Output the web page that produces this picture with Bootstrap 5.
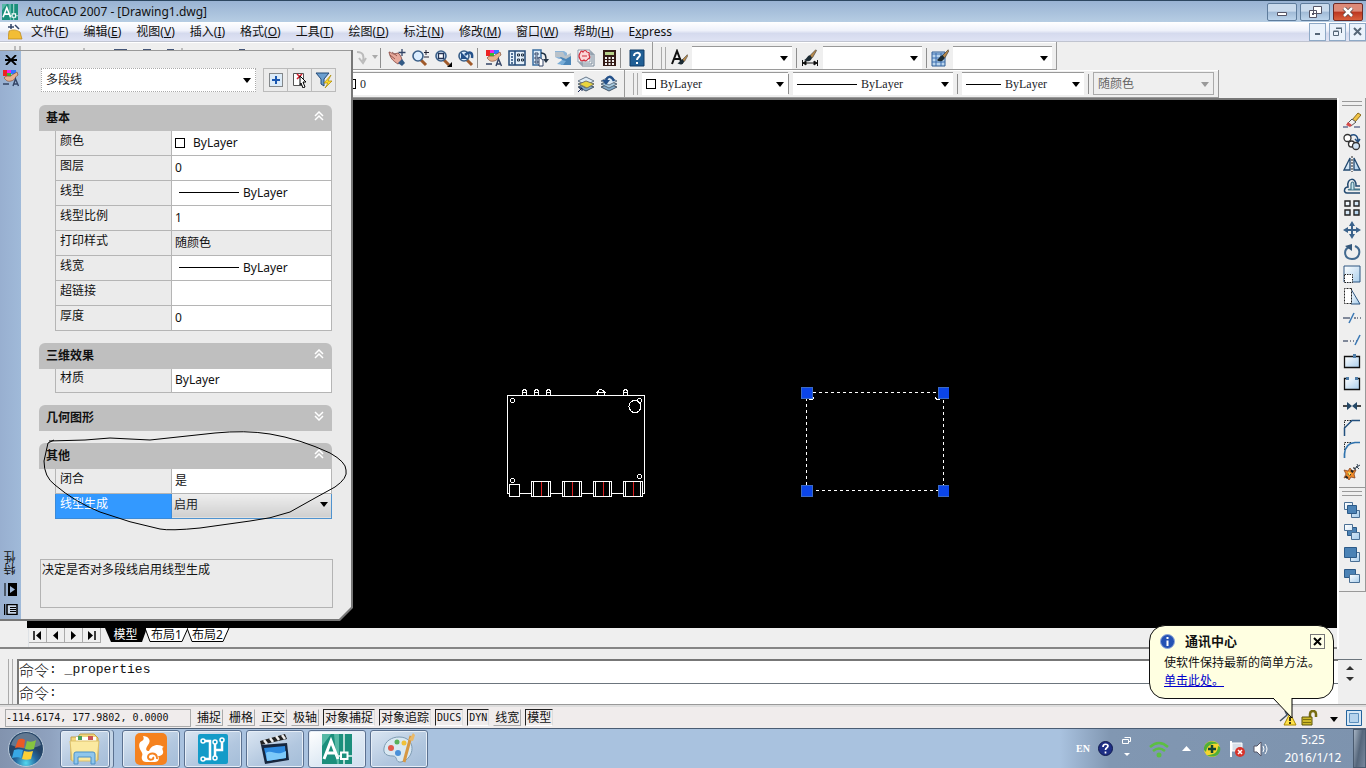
<!DOCTYPE html>
<html lang="zh-CN">
<head>
<meta charset="utf-8">
<meta name="viewport" content="width=device-width, initial-scale=1">
<title>AutoCAD 2007 - [Drawing1.dwg]</title>
<link href="https://cdn.jsdelivr.net/npm/bootstrap@5.3.0/dist/css/bootstrap.min.css" rel="stylesheet">
<style>
:root{--face:#efefef;--line:#9a9a9a;--ui:"Noto Sans","Noto Sans CJK SC",sans-serif}
body{font-family:var(--ui);font-size:12px;line-height:16px;color:#111;background:var(--face);height:100vh;overflow:hidden}
svg{display:block;flex:none}
button,select,input{font:inherit;color:inherit;border-radius:0}
.plain-btn{border:0;background:none;padding:0;display:flex;align-items:center;justify-content:center;flex:none}
/* title and menu */
.titlebar{height:22px;border-top:1px solid #2d4760;background:linear-gradient(#99b3d3,#b6cde3);padding:0 3px 0 2px}
.titlebar h1{font-size:12px;line-height:20px;margin:0 0 0 8px;font-weight:400}
.win-btn{width:30px;height:18px;border:1px solid #5e7c9c;border-radius:2px;background:linear-gradient(#c9daec 0 45%,#a0bad6 50%,#bdd5ec);padding:0;display:flex;align-items:center;justify-content:center}
.win-close{background:linear-gradient(#dd8a78 0 45%,#bb3620 50%,#d9603d);border-color:#6d2a26}
.menubar{height:20px;background:linear-gradient(#fff,#eef1fa 45%,#d5daee 60%,#dfe3f4);border-bottom:1px solid #c0c4d0}
.menu-list{gap:15px}
.menubar a{color:#111;text-decoration:none;line-height:19px;white-space:nowrap}
.btn-gap{gap:3px}
.mdi{width:17px;height:18px;border:1px solid #8ea9c6;background:#eaf2fb;padding:0;display:flex;align-items:center;justify-content:center}
/* toolbars */
.bar-row{height:28px}
.tool-panel{border-right:1px solid var(--line);border-bottom:1px solid var(--line);box-shadow:inset 0 1px #fff}
.tool{width:23px;height:24px}
.vsep{width:1px;height:20px;background:#8e8e8e;flex:none}
.grips{width:5px;height:22px;border-left:1px solid #aaa;border-right:1px solid #aaa;flex:none}
.combo{background:#fff;height:23px;flex:none;border-top:1px solid #999}
.combo .form-select{border:0;padding:0 18px 0 4px;height:22px;line-height:22px;font-size:12px;background-color:transparent;background-position:right 4px center;background-size:8px 5px;min-height:0;
background-image:url("data:image/svg+xml,%3Csvg xmlns='http://www.w3.org/2000/svg' viewBox='0 0 8 5'%3E%3Cpath d='M0 0h8L4 5z'/%3E%3C/svg%3E")}
.combo .form-select:disabled{color:#666;opacity:1;background-image:url("data:image/svg+xml,%3Csvg xmlns='http://www.w3.org/2000/svg' viewBox='0 0 8 5'%3E%3Cpath fill='%23999' d='M0 0h8L4 5z'/%3E%3C/svg%3E")}
.combo.off{background:none;border:1px solid #aaa}
.serif{font-family:"Liberation Serif","Noto Sans CJK SC",serif;color:#000}
.swatch{width:10px;height:10px;border:1px solid #000;background:#fff;flex:none}
.rule-s{height:1px;background:#000;flex:none}
.w60{width:60px}.w35{width:35px}
.sliver{width:349px}
/* drawing area */
.canvas{background:#000;border-top:2px solid #777;min-height:0;margin-left:27px}
.canvas svg{position:absolute}
.d-board{left:478px;top:285px}
.d-sel{left:772px;top:285px}
.side{width:29px;border-left:2px solid #fff}
.side .tool{height:22px;width:28px}
.side-group{border-bottom:1px solid #999;border-right:1px solid #999}
.hgrips{height:5px;width:20px;border-top:1px solid #999;border-bottom:1px solid #999;margin:3px 0}
.tabstrip{height:21px;border-bottom:2px solid #858585}
.tabstrip .nav-b{width:18px;height:15px;border-right:1px solid #aaa;border-bottom:1px solid #aaa}
.sheet{position:relative;height:15px;padding:0;border:0;background:none;line-height:13px;font-size:12px;display:flex;align-items:flex-start;justify-content:center}
.sheet svg{position:absolute;left:0;top:0}
.sheet span{position:relative}
.tab-l{width:41px}
/* command window */
.command{height:56px;padding-top:10px;border-bottom:1px solid #999}
.cmd-box{background:#fff;border-top:2px solid #777;border-left:2px solid #777}
.cmd-box .ln{height:23px;display:flex;align-items:center;font-family:"Noto Sans CJK SC",sans-serif;font-size:15px;font-weight:300;line-height:18px;white-space:pre;padding-bottom:4px}
.cmd-box label.ln{height:20px;padding-bottom:2px}
.cmd-box code{font-family:"Liberation Mono",monospace;font-size:13px;color:#111}
.cmd-box input{border:0;outline:0;background:none;min-width:0}
.thumbs{width:24px}
/* status */
.statusbar{height:23px;background:#f0ecec;border-top:2px solid #ddd;padding:0 4px 0 5px;gap:4px}
.statusbar button{border:1px solid transparent;border-right-color:#aaa;border-bottom-color:#aaa;background:none;padding:0 1px;height:17px;line-height:16px;white-space:nowrap}
.statusbar button.on{border-color:#222 #ddd #fff #222}
.mono{font-family:"DejaVu Sans Mono",monospace;font-size:10px}
.coords{width:186px;height:18px;border:1px solid #aaa;line-height:16px;white-space:pre}
/* taskbar */
.taskbar{height:40px;background:linear-gradient(90deg,#8293ae 0,#8fa2bf 50px,#a9c2df 100px,#a9c2df 1060px,#8197b2 1110px,#7d93ae);border-top:1px solid #4b5d74}
.task-list{gap:4px}
.start{width:60px;padding-right:8px}
.task{width:58px;height:38px;border:1px solid #5b7190;border-radius:3px;background:linear-gradient(150deg,#dbe6f2,#b2c7df 60%,#a4bdd8);box-shadow:inset 0 0 0 1px #e6eef7;padding:0;display:flex;align-items:center;justify-content:center}
.task.stack{width:50px;margin-right:8px;box-shadow:inset 0 0 0 1px #e6eef7,3px 0 0 #c3d4e6,4px 0 0 #5b7190}
.task.now{background:linear-gradient(150deg,#fff,#dce8f3 60%,#cfe0ef)}
.lang{font-size:10px;color:#fff;font-weight:700}
.clock{color:#fff;font-size:12px;line-height:18px;width:64px}
.show-desk{width:13px;height:39px;border:1px solid #4a5b70;background:linear-gradient(100deg,#a5b3c3,#55667b 50%,#77889d)}
/* properties palette */
.palette{position:absolute;left:0;top:50px;width:353px;height:571px;background:#777;clip-path:polygon(0 0,100% 0,100% 558px,340px 100%,0 100%);z-index:5}
.palette-in{width:351px;height:569px;background:#ebebeb;clip-path:polygon(0 0,100% 0,100% 557px,339px 100%,0 100%);border-top:1px solid #999}
.spine{width:21px;flex:none;background:linear-gradient(90deg,#98afd0,#a0bad9)}
.spine-title{writing-mode:vertical-rl;transform:rotate(180deg);font-size:12px;line-height:16px}
.p-body{padding:17px 18px 11px 18px}
.obj-row{margin-bottom:13px;padding-left:2px}
.combo.obj{width:215px;height:24px;border:1px dotted #aaa}
.sq{width:25px;height:24px;border:1px solid #bbb;margin-left:-1px}
.sec-h{height:26px;background:#bfbfbf;border:0;border-radius:6px 6px 0 0;padding:0 8px 0 7px;font-weight:700;font-size:12px;line-height:24px;width:293px;display:flex;align-items:center;justify-content:space-between;text-align:left}
.sec{margin-bottom:12px}
.props{width:277px;margin:0 0 0 16px;table-layout:fixed;border-collapse:collapse;font-size:12px}
.props th,.props td{height:25px;border:1px solid #b5b5b5;line-height:18px;padding:0 0 4px 4px;font-weight:400}
.props tr:first-child>*{border-top:0;height:24px}
.props th{width:116px}
.props td{background:#fff;padding:0 0 0 3px}
.props .dim{background:#ebebeb}
.props input{border:0;padding:0;width:100%;height:18px;background:none;outline:0;display:block}
.props .sel th{background:#3399ff;color:#fff;border-color:#3a8ad8}
.props .sel td{background:linear-gradient(#efefef,#cfcfcf);border-color:#4f93cf;padding:0 0 2px 2px}
.props .sel .form-select{border:0;padding:0;height:20px;min-height:0;line-height:20px;font-size:12px;background-color:transparent;background-position:right 3px center;background-size:8px 5px;background-image:url("data:image/svg+xml,%3Csvg xmlns='http://www.w3.org/2000/svg' viewBox='0 0 8 5'%3E%3Cpath d='M0 0h8L4 5z'/%3E%3C/svg%3E")}
.hint{height:49px;width:293px;border:1px solid #b3b3b3;padding:2px 1px;margin-left:1px}
.scribble{position:absolute;left:40px;top:379px;pointer-events:none}
/* balloon */
.balloon{position:absolute;right:32px;bottom:69px;width:185px;height:74px;background:#ffffe1;border:1px solid #111;border-radius:16px;z-index:6;padding:7px 8px 0 10px;white-space:nowrap;font-family:"Noto Sans CJK SC",sans-serif}
.balloon .tail{position:absolute;left:123px;top:71px}
.balloon .shut{width:15px;height:15px;border:1px solid #777;background:#ffffe8}
.balloon strong{font-size:13px;margin-left:10px}
.balloon-text{line-height:18px}
.balloon a{color:#00c}
</style>
</head>
<body class="d-flex flex-column position-relative">

<svg width="0" height="0" class="position-absolute" aria-hidden="true">
 <defs>
  <linearGradient id="gb" x1="0" y1="0" x2="1" y2="1"><stop offset="0" stop-color="#fff"/><stop offset="1" stop-color="#a8cdec"/></linearGradient>
  <symbol id="brush" viewBox="0 0 18 18"><path d="M17 1 9 9l2 3 2-1 5-9z" fill="#b98a4a" stroke="#333" stroke-width=".8"/><path d="M10 8c-4 0-4 5-8 6 4 3 10 2 10-3z" fill="#1c2b33"/></symbol>
  <symbol id="lens" viewBox="0 0 18 18"><path d="m10 11 5 5" stroke="#a05a2a" stroke-width="3"/><circle cx="7" cy="7" r="5" fill="#dceeff" stroke="#3a5f88" stroke-width="1.6"/></symbol>
  <symbol id="props-i" viewBox="0 0 18 18"><path d="M1 1h4v6H1z" fill="#e22"/><path d="M5 1h4v4H5z" fill="#e2e"/><path d="M9 1h5v4H9z" fill="#37f"/><path d="M5 4h4v3H5z" fill="#3b3"/><path d="M2 9c3-4 6 0 8-3l5-3 1 3c-3 1-2 5-7 6-4 1-5-1-7-3z" fill="#e9b18e" stroke="#84513a" stroke-width=".7"/><path d="m11 17 2.500-7 3 7m-5-2h4M1 15h6" stroke="#346" fill="none" stroke-width="1.400"/></symbol>
  <symbol id="layers" viewBox="0 0 18 18"><path d="m1 12 8-3 8 3-8 4z" fill="#7fa8c8" stroke="#456"/><path d="m1 9 8-3 8 3-8 4z" fill="#a8cbe0" stroke="#567"/><path d="m1 6 8-4 8 4-8 4z" fill="#dceaf5" stroke="#678"/></symbol>
  <symbol id="up2" viewBox="0 0 10 10"><path d="m1 5 4-4 4 4M1 9l4-4 4 4" fill="none" stroke="#fff" stroke-width="1.500"/></symbol>
  <symbol id="acad" viewBox="0 0 30 30"><path d="M0 0h30v30H0z" fill="#1b8f7c"/><path d="M0 0h9l-9 12zM12 0h5v30h-2z" fill="#56b9a5"/><path d="M2 25 9 7l7 18M5 19h9" fill="none" stroke="#fff" stroke-width="3"/><path d="M22 0v18m0 7v5M14 22h5m7 0h4" stroke="#e9f6f2" stroke-width="1.500"/><path d="M19 18.500h6.500V25H19z" fill="none" stroke="#fff" stroke-width="2"/></symbol>
 </defs>
</svg>

<header>
 <div class="titlebar d-flex align-items-center">
  <svg width="16" height="16"><use href="#acad"/></svg>
  <h1 class="flex-grow-1">AutoCAD 2007 - [Drawing1.dwg]</h1>
  <div class="d-flex btn-gap">
   <button class="win-btn" aria-label="最小化"><svg width="12" height="10"><path d="M1.500 5.500h9v3h-9z" fill="#fff" stroke="#556"/></svg></button>
   <button class="win-btn" aria-label="还原"><svg width="13" height="12"><path d="M4.500.5h8v7h-8zM.5 4.500h7v7h-7z" fill="#fff" stroke="#556"/><path d="M3 7h2v2H3z" fill="#556"/></svg></button>
   <button class="win-btn win-close" aria-label="关闭"><svg width="12" height="10"><path d="m2 1 8 8m0-8L2 9" stroke="#544" stroke-width="4"/><path d="m2 1 8 8m0-8L2 9" stroke="#fff" stroke-width="2.500"/></svg></button>
  </div>
 </div>
 <nav class="menubar d-flex align-items-center ps-2">
  <svg width="15" height="16" class="me-2"><path d="M1 2h6l5 4v9H1z" fill="#fff"/><path d="m0 15 1-8c4-2 8-1 11 1l2 7z" fill="#f2bd35" stroke="#b98417" stroke-width=".7"/><path d="M3 0v5M0 3h6m1-2 4 4" stroke="#346" stroke-width="1.500"/></svg>
  <div class="d-flex flex-grow-1 menu-list">
   <a href="#">文件(<u>F</u>)</a><a href="#">编辑(<u>E</u>)</a><a href="#">视图(<u>V</u>)</a><a href="#">插入(<u>I</u>)</a><a href="#">格式(<u>O</u>)</a><a href="#">工具(<u>T</u>)</a><a href="#">绘图(<u>D</u>)</a><a href="#">标注(<u>N</u>)</a><a href="#">修改(<u>M</u>)</a><a href="#">窗口(<u>W</u>)</a><a href="#">帮助(<u>H</u>)</a><a href="#">E<u>x</u>press</a>
  </div>
  <div class="d-flex btn-gap">
   <button class="mdi" aria-label="最小化图形"><svg width="9" height="9"><path d="M2 7h5" stroke="#567" stroke-width="2"/></svg></button>
   <button class="mdi" aria-label="还原图形"><svg width="9" height="9"><path d="M3 1.500h5.500V6M.5 4.500h5v4h-5zM3 1h6M.5 4h5" fill="none" stroke="#567"/></svg></button>
   <button class="mdi" aria-label="关闭图形"><svg width="9" height="9"><path d="m1 1 7 7m0-7L1 8" stroke="#567" stroke-width="2"/></svg></button>
  </div>
 </nav>

 <div class="bar-row d-flex">
  <div class="tool-panel d-flex align-items-center pt-1 pe-1">
   <svg class="sliver" height="24"><path d="M15 0v6m5-6v6M84 2v6m98-6v6m111-6v6" stroke="#888"/><path d="M49 5h7m58-1h13m16 0h8m16 0h7m65 0h6" stroke="#457" stroke-width="2"/></svg>
   <button class="tool plain-btn" aria-label="重做"><svg width="18" height="18"><path d="M5 3c7 0 7 5 6 9m-4-3 4 5 3-5" fill="none" stroke="#bbb" stroke-width="2"/></svg></button>
   <svg width="8" height="5"><path d="M0 0h6L3 4z" fill="#aaa"/></svg>
   <span class="vsep me-1"></span>
   <button class="tool plain-btn" aria-label="平移"><svg width="18" height="18"><path d="M1 3c2 0 3 2 5 2l4-1c3 2 4 6 4 8l-4 3C5 12 2 9 1 3z" fill="#e7a99b" stroke="#82433b" stroke-width=".8"/><path d="m2 6 5 4M4 3l5 4" stroke="#82433b" stroke-width=".8"/><path d="m10 14 4-4 3 4-3 3z" fill="#345b86"/><path d="M14 0v7M10.500 3.500h7" stroke="#346" stroke-width="1.300"/></svg></button>
   <button class="tool plain-btn" aria-label="实时缩放"><svg width="18" height="18"><use href="#lens"/><path d="M15 1v5m-2-2.500h5M13 8h5" stroke="#223"/></svg></button>
   <button class="tool plain-btn" aria-label="窗口缩放"><svg width="18" height="18"><use href="#lens"/><path d="M4.500 4.500h5v5h-5z" fill="#fff" stroke="#235" stroke-width="1.300"/><path d="M18 13v5h-5z"/></svg></button>
   <button class="tool plain-btn" aria-label="缩放上一个"><svg width="18" height="18"><use href="#lens"/><path d="M15 9c1-6-3-7-7-3" fill="none" stroke="#24518a" stroke-width="2.500"/><path d="M4 3v7h7z" fill="#24518a"/></svg></button>
   <span class="vsep me-1"></span>
   <button class="tool plain-btn" aria-label="特性"><svg width="18" height="18"><use href="#props-i"/></svg></button>
   <button class="tool plain-btn" aria-label="设计中心"><svg width="18" height="18"><path d="M1 2h16v14H1z" fill="#e5f1fb" stroke="#234a77" stroke-width="1.500"/><path d="M7 2v14M3 5h2M3 8h2m-2 3h2m-2 3h2" stroke="#234a77" stroke-width="1.500"/><path d="M9.500 5h2v2h-2zm4 0h2v2h-2zm-4 5h2v2h-2zm4 0h2v2h-2z" fill="none" stroke="#234"/></svg></button>
   <button class="tool plain-btn" aria-label="工具选项板"><svg width="18" height="18"><path d="M2 1h8v15H2z" fill="#d9ebf9" stroke="#3a6da0" stroke-width="1.500"/><path d="M4 4h3v2H4zm0 4h3v2H4zm0 4h3v2H4z" fill="none" stroke="#346"/><path d="M10 4c5 0 5 3 5 8" fill="none" stroke="#234" stroke-width="1.500"/><path d="m12 10 3 4 3-4z" fill="#234"/><path d="M8 8l4 3v6H8z" fill="#fff" stroke="#346"/></svg></button>
   <button class="tool plain-btn" aria-label="图纸集"><svg width="18" height="18"><path d="M1 2h9l3 2v6H5L1 8z" fill="#8db5d8"/><path d="M5 7h12v9H7l2-4z" fill="#4b86b8"/><path d="M1 3h8l2 4 6-3v3l-5 3-5-2H1z" fill="#b9c2c9"/><path d="m3 15 5-4 4 1-3 4z" fill="#7aaed8"/></svg></button>
   <button class="tool plain-btn" aria-label="标记集"><svg width="18" height="18"><path d="M5 5h12v12H5zM3 3h12v12H3z" fill="#f4f4f4" stroke="#789"/><path d="M1 1h12v12H1z" fill="#fff" stroke="#89a"/><path d="M3 4q1-3 3-1 2-3 4 0 3 0 2 3 2 3-1 4-2 3-4 1-3 2-4-1-2-3 0-6zM5 7h5" fill="#fbd6d8" stroke="#d02a3a" stroke-width="1.200"/></svg></button>
   <button class="tool plain-btn" aria-label="计算器"><svg width="18" height="18"><path d="M3 1h13v16H3z" fill="#321a16"/><path d="M5 3h9v3H5z" fill="#b6d08a"/><path d="M5 9h9M5 12h9m-9 3h9" stroke="#f2f2f2" stroke-width="2" stroke-dasharray="2 1.500"/></svg></button>
   <span class="vsep me-1"></span>
   <button class="tool plain-btn" aria-label="帮助"><svg width="18" height="18"><path d="M2 1h14v16H2z" fill="#215f95" stroke="#123c66"/><path d="M6 7c0-4 6-4 6-1 0 2-3 2-3 5m0 2v2" fill="none" stroke="#fff" stroke-width="2"/></svg></button>
  </div>
  <div class="tool-panel d-flex align-items-center pt-1 ps-1 pe-1 flex-shrink-0">
   <span class="grips ms-1 me-1"></span>
   <svg width="18" height="18" class="me-1"><path d="M2 15 7 2l5 13M4 10h7" fill="none" stroke="#111" stroke-width="2"/><use href="#brush" x="6" y="5" width="12" height="12"/></svg>
   <div class="combo" style="width:100px"><select class="form-select" aria-label="文字样式"><option></option></select></div>
   <span class="vsep mx-1"></span>
   <svg width="18" height="18" class="me-1"><use href="#brush" width="17" height="14"/><path d="M1.500 11v6m15-6v6M2 14h14M2 14l3-2v4zm14 0-3-2v4z" stroke="#111"/></svg>
   <div class="combo" style="width:99px"><select class="form-select" aria-label="标注样式"><option></option></select></div>
   <span class="vsep mx-1"></span>
   <svg width="18" height="18" class="me-1"><path d="M1 3h13v14H1z" fill="#b9d5ee" stroke="#2c5b92"/><path d="M1 5h13M1 9h13M1 13h13M5 4v13m5-13v13" stroke="#3a6dad"/><use href="#brush" x="4" width="14" height="14"/></svg>
   <div class="combo" style="width:99px"><select class="form-select" aria-label="表格样式"><option></option></select></div>
  </div>
 </div>
 <div class="bar-row d-flex serif">
  <div class="tool-panel d-flex align-items-center pe-1">
   <div class="combo d-flex align-items-center" style="width:574px"><span class="swatch" style="margin-left:346px"></span><select class="form-select" aria-label="图层"><option>0</option></select></div>
   <button class="tool plain-btn" aria-label="图层置为当前"><svg width="18" height="18"><use href="#layers"/><path d="m2 9 7-3 8 3-7 4z" fill="#e9d53c" stroke="#776"/><path d="m1 17 4-4m-3 0h3v3" stroke="#125" fill="none"/></svg></button>
   <button class="tool plain-btn" aria-label="上一个图层"><svg width="18" height="18"><use href="#layers"/><path d="M14 6C11 0 7 1 6 6" fill="none" stroke="#24518a" stroke-width="2.500"/><path d="m2 5 4 5 4-5z" fill="#24518a"/></svg></button>
  </div>
  <div class="tool-panel d-flex align-items-center ps-1 pe-1 flex-shrink-0">
   <span class="grips mx-1"></span>
   <div class="combo d-flex align-items-center ps-1" style="width:146px"><span class="swatch"></span><select class="form-select" aria-label="颜色"><option>ByLayer</option></select></div>
   <span class="vsep me-1"></span>
   <div class="combo d-flex align-items-center ps-1" style="width:160px"><span class="rule-s w60"></span><select class="form-select" aria-label="线型"><option>ByLayer</option></select></div>
   <span class="vsep mx-1"></span>
   <div class="combo d-flex align-items-center ps-1" style="width:122px"><span class="rule-s w35"></span><select class="form-select" aria-label="线宽"><option>ByLayer</option></select></div>
   <span class="vsep mx-1"></span>
   <div class="combo off" style="width:121px"><select class="form-select" aria-label="打印样式" disabled><option>随颜色</option></select></div>
  </div>
 </div>
</header>

<main class="d-flex flex-grow-1" style="min-height:0">
 <div class="d-flex flex-column flex-grow-1" style="min-width:0">
  <div class="canvas flex-grow-1 position-relative overflow-hidden">
   <svg class="d-board" width="142" height="114" fill="none" stroke="#fff" shape-rendering="crispEdges">
    <path d="M2.500 10.500h137v98h-137z"/>
    <path d="M17.500 10V6q2-3 4 0v4m-4-3h4m8 3V6q2-3 4 0v4m-4-3h4m8 3V6q2-3 4 0v4m-4-3h4m47 3V7q3-5 7 0v3m-9-3h10m18 3V6q2-3 4 0v4m-4-3h4"/>
    <circle cx="130" cy="21.500" r="6"/><circle cx="7.500" cy="15.500" r="2"/><circle cx="134.500" cy="15.500" r="2"/><circle cx="7.500" cy="95.500" r="2"/><circle cx="134.500" cy="91.500" r="2"/>
    <path fill="#000" d="M4.500 99.500h10v12h-10zM26.500 96.500h19v15h-19zM57.500 96.500h19v15h-19zM88.500 96.500h18v15h-18zM118.500 96.500h19v15h-19z"/>
    <path d="M28.500 97v14M43.500 97v14M59.500 97v14M74.500 97v14M90.500 97v14M104.500 97v14M120.500 97v14M135.500 97v14"/>
    <g fill="#e02020" stroke="none"><rect x="36" y="97" width="1" height="14"/><rect x="67" y="97" width="1" height="14"/><rect x="98" y="97" width="1" height="14"/><rect x="128" y="97" width="1" height="14"/></g>
   </svg>
   <svg class="d-sel" width="150" height="112" shape-rendering="crispEdges">
    <path d="M7.500 7.500h137v98H7.500z" fill="none" stroke="#fff" stroke-dasharray="3 3"/><path d="M10 14l3 1 2-3m121 0 2 3 3-1" fill="none" stroke="#fff"/>
    <path d="M2 2h11v11H2zm137 0h11v11h-11zM2 100h11v11H2zm137 0h11v11h-11z" fill="#0b45e8" stroke="#3b6ac4"/>
   </svg>
  </div>
  <div class="tabstrip d-flex ps-4">
   <div class="d-flex border-start ms-1">
    <button class="nav-b plain-btn" aria-label="第一个"><svg width="9" height="9"><path d="M1 0v9" stroke="#000" stroke-width="1.500"/><path d="M8 0v9L3 4.500z"/></svg></button>
    <button class="nav-b plain-btn" aria-label="上一个"><svg width="9" height="9"><path d="M7 0v9L2 4.500z"/></svg></button>
    <button class="nav-b plain-btn" aria-label="下一个"><svg width="9" height="9"><path d="M2 0v9l5-4.500z"/></svg></button>
    <button class="nav-b plain-btn" aria-label="最后一个"><svg width="9" height="9"><path d="M8 0v9" stroke="#000" stroke-width="1.500"/><path d="M1 0v9l5-4.500z"/></svg></button>
   </div>
   <div class="d-flex ms-1">
    <button class="sheet tab-l text-white"><svg width="42" height="15"><path d="M0 0h42l-5 14H6z"/></svg><span>模型</span></button>
    <button class="sheet tab-l"><svg width="44" height="15"><path d="M-1 0l5 13.500h32L42 0" fill="#fff" stroke="#000"/></svg><span>布局1</span></button>
    <button class="sheet tab-l"><svg width="44" height="15"><path d="M0 0l5 13.500h31L42 0" fill="#fff" stroke="#000"/></svg><span>布局2</span></button>
   </div>
  </div>
 </div>
 <aside class="side d-flex flex-column flex-shrink-0">
  <div class="side-group d-flex flex-column align-items-center pb-1">
   <span class="hgrips"></span>
   <button class="tool plain-btn" aria-label="删除"><svg width="18" height="18"><path d="m9 9 6-7 3 2-6 7z" fill="#f0c244" stroke="#8a6a1c"/><path d="m4 13 5-5 4 3-5 4z" fill="#f0f0f0" stroke="#555"/><path d="M3 14l2-3 4 3-2 2z" fill="#d54b4b"/><path d="M0 16h5m6 0h6" stroke="#236"/></svg></button>
   <button class="tool plain-btn" aria-label="复制"><svg width="18" height="18"><path d="M7 3c5-3 8 0 8 5m-3-2 3 3 2-3" stroke="#234f80" fill="none" stroke-width="1.500"/><g fill="#fff" stroke="#333" stroke-width="1.300"><circle cx="4.500" cy="5" r="3.500"/><circle cx="8.500" cy="11" r="3"/><circle cx="13" cy="13" r="3.500" fill="#cfe2f3"/></g></svg></button>
   <button class="tool plain-btn" aria-label="镜像"><svg width="18" height="18"><path d="M7 3v12H1zm4 0v12h6z" fill="url(#gb)" stroke="#234a70" stroke-width="1.300"/><path d="M9 1v16" stroke="#222" stroke-dasharray="2 1"/></svg></button>
   <button class="tool plain-btn" aria-label="偏移"><svg width="18" height="18"><path d="M17 16H4c-4 0-3-6 1-6C3 0 14 0 13 9h4" fill="none" stroke="#234a70" stroke-width="1.500"/><path d="M17 13H6c-1 0-1-1 2-1V8c0-4 3-4 3 0v4h6" fill="#c7e6ee" stroke="#46788c" stroke-width="1.200"/></svg></button>
   <button class="tool plain-btn" aria-label="阵列"><svg width="18" height="18"><path d="M2 2h5v5H2zm9 0h5v5h-5zM2 11h5v5H2zm9 0h5v5h-5z" fill="url(#gb)" stroke="#222" stroke-width="1.400"/></svg></button>
   <button class="tool plain-btn" aria-label="移动"><svg width="18" height="18"><path d="M9 2v14M2 9h14" stroke="#3b638c" stroke-width="2"/><path d="m9 0 3 5H6zm0 18 3-5H6zM0 9l5-3v6zm18 0-5-3v6z" fill="#3b638c"/></svg></button>
   <button class="tool plain-btn" aria-label="旋转"><svg width="18" height="18"><path d="M12 3c7 3 5 13-3 13C1 16 0 7 6 4" fill="none" stroke="#42698f" stroke-width="2"/><path d="M2 3 9 1v7z" fill="#35587b"/></svg></button>
   <button class="tool plain-btn" aria-label="缩放"><svg width="18" height="18"><path d="M1 1h16v16H1z" fill="url(#gb)" stroke="#2d5580"/><path d="M1.500 9.500h8v8h-8z" fill="#fff" stroke="#222" stroke-dasharray="1.500 1"/></svg></button>
   <button class="tool plain-btn" aria-label="拉伸"><svg width="18" height="18"><path d="M8 2l9 15H8z" fill="url(#gb)" stroke="#2d5580"/><path d="M8.500 1.500h-7v15h7z" fill="#fff" stroke="#222" stroke-dasharray="2 1"/></svg></button>
   <button class="tool plain-btn" aria-label="修剪"><svg width="18" height="18"><path d="M0 9h7m4 0h2m1 0h1m2 0h1" stroke="#124"/><path d="m6 14 5-10" stroke="#3b79b5" stroke-width="1.500"/></svg></button>
   <button class="tool plain-btn" aria-label="延伸"><svg width="18" height="18"><path d="M0 10h5m2 0h1m2 0h1m2 0h1" stroke="#124"/><path d="m12 14 5-10" stroke="#3b79b5" stroke-width="1.500"/></svg></button>
   <button class="tool plain-btn" aria-label="打断于点"><svg width="18" height="18"><path d="M1.500 3.500h15v11h-15z" fill="url(#gb)" stroke="#111" stroke-width="1.300"/><path d="M10 1h3v4h-3z" fill="#4f7da8"/></svg></button>
   <button class="tool plain-btn" aria-label="打断"><svg width="18" height="18"><path d="M5 3.500H1.500v11h15v-11H13" fill="url(#gb)" stroke="#111" stroke-width="1.300"/><path d="M3 2h3v3H3zm9 0h3v3h-3z" fill="#4f7da8"/></svg></button>
   <button class="tool plain-btn" aria-label="合并"><svg width="18" height="18"><path d="M0 9h5m8 0h5" stroke="#111" stroke-width="1.500"/><path d="M4 5l5 4-5 4zm10 0L9 9l5 4z" fill="#234766"/></svg></button>
   <button class="tool plain-btn" aria-label="倒角"><svg width="18" height="18"><path d="M1.500 9V1.500H9" fill="none" stroke="#222" stroke-dasharray="1.500 1"/><path d="M1.500 17V9L9 1.500h8" fill="none" stroke="#23507e" stroke-width="1.500"/></svg></button>
   <button class="tool plain-btn" aria-label="圆角"><svg width="18" height="18"><path d="M1.500 9V1.500H9" fill="none" stroke="#222" stroke-dasharray="1.500 1"/><path d="M1.500 17v-4C2 5 6 2 12 1.500h5" fill="none" stroke="#2f72ad" stroke-width="1.700"/></svg></button>
   <button class="tool plain-btn" aria-label="分解"><svg width="18" height="18"><path d="m1 15 2-4-2-4 4 1 2-3 2 3 4-1-2 4 1 4-4-1-2 3-2-3z" fill="#ef8a28" stroke="#842" stroke-width=".8"/><path d="m3 15 9-10" stroke="#222" stroke-width="3" stroke-dasharray="2 2"/><path d="m11 6 6-4m-4 1 3 3M14 1l1 2" stroke="#345"/><path d="M5 9l3 1-2 3z" fill="#fe6"/></svg></button>
  </div>
  <div class="side-group d-flex flex-column align-items-center pb-1">
   <span class="hgrips"></span>
   <button class="tool plain-btn" aria-label="前置"><svg width="18" height="18"><path d="M1.500 1.500h8v7h-8zm7 8h8v7h-8z" fill="url(#gb)" stroke="#4a6f94"/><path d="M4.500 4.500h9v8h-9z" fill="#4b82b5" stroke="#2c5a88"/></svg></button>
   <button class="tool plain-btn" aria-label="后置"><svg width="18" height="18"><path d="M4.500 4.500h9v8h-9z" fill="#4b82b5" stroke="#2c5a88"/><path d="M1.500 1.500h8v6h-8zm7 8h8v7h-8z" fill="url(#gb)" stroke="#4a6f94"/></svg></button>
   <button class="tool plain-btn" aria-label="置于对象之上"><svg width="18" height="18"><path d="M7.500 7.500h9v9h-9z" fill="url(#gb)" stroke="#4a6f94"/><path d="M1.500 2.500h12v10h-12z" fill="#4b82b5" stroke="#2c5a88"/></svg></button>
   <button class="tool plain-btn" aria-label="置于对象之下"><svg width="18" height="18"><path d="M1.500 2.500h11v8h-11z" fill="#4b82b5" stroke="#2c5a88"/><path d="M6.500 7.500h10v8h-10z" fill="url(#gb)" stroke="#4a6f94"/></svg></button>
  </div>
 </aside>
</main>

<section class="command d-flex ps-2 pe-1" aria-label="命令窗口">
 <span class="grips h-100 me-1"></span>
 <div class="cmd-box flex-grow-1 d-flex flex-column">
  <div class="ln border-bottom border-secondary">命令<code>: _properties</code></div>
  <label class="ln">命令<code>: </code><input type="text" class="flex-grow-1"></label>
 </div>
 <div class="thumbs d-flex flex-column align-items-center border-top border-secondary pt-1">
  <svg width="8" height="20"><path d="M0 6h8L4 2zM0 13h8l-4 4z" fill="#333"/></svg>
 </div>
</section>

<section class="statusbar d-flex align-items-center">
 <div class="coords mono">-114.6174, 177.9802, 0.0000</div>
 <button>捕捉</button><button>栅格</button><button>正交</button><button>极轴</button><button class="on">对象捕捉</button><button class="on">对象追踪</button><button class="on mono">DUCS</button><button class="on mono">DYN</button><button>线宽</button><button class="on">模型</button>
 <div class="ms-auto d-flex align-items-center gap-1">
  <svg width="18" height="17"><path d="M1 12 8 6 6 2m5 0L7 7" stroke="#456" stroke-width="1.500" fill="none"/><path d="m11 4 6 12H5z" fill="#ffe14a" stroke="#a80"/><path d="M11 8v4m0 1v2" stroke="#000" stroke-width="1.500"/></svg>
  <svg width="17" height="16"><path d="M9 8V4c0-4 6-4 6 0v3" fill="none" stroke="#776b10" stroke-width="2.500"/><path d="M1 7h10v8H1z" fill="#cdb92a" stroke="#5d5408"/><path d="M2 9.500h8m-8 3h8" stroke="#7c6f10"/></svg>
  <svg width="8" height="5" class="ms-2 me-1 mt-1"><path d="M0 0h8L4 5z"/></svg>
  <svg width="16" height="16"><path d="M.5.5h15v15H.5z" fill="#d7e8f6" stroke="#23639d"/><path d="M3.500 3.500h9v9h-9z" fill="#b5d3ed" stroke="#5c8fbd"/></svg>
 </div>
</section>

<footer class="taskbar d-flex align-items-center">
 <button class="plain-btn start" aria-label="开始"><svg width="38" height="38"><defs><radialGradient id="orb" cy=".9"><stop offset="0" stop-color="#54d8ef"/><stop offset=".6" stop-color="#25689f"/><stop offset="1" stop-color="#244467"/></radialGradient></defs><circle cx="19" cy="19" r="17.500" fill="url(#orb)" stroke="#b9c9d9"/><path d="M4 15C8-1 30-1 34 15c-9 5-20 4-30 0z" fill="#fff" opacity=".28"/><path d="M11 10c3-2 5-1 7 0l-1 8c-3-1-6-1-9 0z" fill="#ea5a26"/><path d="M20 11c3 1 6 1 9-1l-2 9c-3 1-6 1-9 0z" fill="#86c440"/><path d="M7 20c3-1 6-1 9 0l-2 8c-2-1-6-1-9 0z" fill="#38a7e5"/><path d="M17 21c3 1 6 1 9 0l-2 8c-3 1-6 1-9 0z" fill="#fbcf36"/></svg></button>
 <div class="d-flex flex-grow-1 task-list">
  <button class="task stack" aria-label="资源管理器"><svg width="34" height="32"><path d="M3 4h7l2-3h14l4 4v22H3z" fill="#f1d67d" stroke="#c3a04b"/><path d="M8 4h20v6H8z" fill="#fff"/><path d="M10 3h4v4h-4z" fill="#4aa05a"/><path d="M20 3h5v4h-5z" fill="#c55"/><path d="M2 8h29l-2 20H4z" fill="#fbe9a0" stroke="#dcc06a"/><path d="M6 31V21q0-2 2-2h17q2 0 2 2v10h-4v-7H10v7z" fill="#8fc6ec" stroke="#4a90c8"/></svg></button>
  <button class="task" aria-label="UC 浏览器"><svg width="32" height="32"><rect width="32" height="32" rx="5" fill="#f5821f"/><path d="M8 3c5 0 9 4 5 9-3 4-2 6 1 6 2-6 9-8 15-4-2 0-2 2-1 4 1 3-2 5-5 5 2 3 0 6-3 6H11c-3 0-5-3-4-6 1-2 0-3-1-5-3-5-2-9 1-10 2-1 2-3 1-5z" fill="#fff"/><path d="M22 26c1-7-9-7-9-2 0 4 7 3 5 0" fill="none" stroke="#f5821f" stroke-width="2"/></svg></button>
  <button class="task" aria-label="布线工具"><svg width="32" height="32"><rect x="1" y="1" width="30" height="30" rx="2" fill="#139bc8"/><path d="M6 8h7v18H6M18 23V17h7V9M18 9v8" fill="none" stroke="#fff" stroke-width="2.500"/><g fill="#139bc8" stroke="#fff" stroke-width="1.500"><circle cx="6" cy="8" r="2"/><circle cx="6" cy="26" r="2"/><circle cx="18" cy="25" r="2"/><circle cx="18" cy="9" r="2"/><circle cx="25" cy="7" r="2"/></g></svg></button>
  <button class="task" aria-label="视频编辑"><svg width="32" height="32"><path d="m1 8 25-7 2 5L2 12z" fill="#222"/><path d="m5 7 3 4m3-6 3 4m3-6 3 4m3-5 3 4" stroke="#eee" stroke-width="2.500"/><path d="m2 12 26-2 2 17-24 4z" fill="#16263e"/><path d="m5 15 21-2 1 12-19 3z" fill="#2d8ae0"/><path d="M7 20c6-4 10 4 20-2v7L8 28z" fill="#7cc9fa"/></svg></button>
  <button class="task now" aria-label="AutoCAD"><svg width="30" height="30"><use href="#acad"/></svg></button>
  <button class="task" aria-label="画图"><svg width="34" height="32"><path d="M17 4c18 0 16 22 2 25-6 1-3-6-8-6-6 0-10-2-9-8C3 8 10 4 17 4z" fill="#d9e8f2" stroke="#7d9bb3"/><circle cx="9" cy="15" r="3" fill="#e15a4c"/><circle cx="15" cy="9" r="2.500" fill="#58b05a"/><circle cx="22" cy="10" r="2.500" fill="#f0c23a"/><circle cx="16" cy="20" r="3" fill="#4a90d8"/><path d="m29 3-7 26" stroke="#d69843" stroke-width="3"/><path d="m31 0-4 7 4 1 2-6z" fill="#eab968"/></svg></button>
 </div>
 <div class="d-flex align-items-center gap-2 text-white">
  <span class="serif lang">EN</span>
  <svg width="15" height="15"><circle cx="7.500" cy="7.500" r="7" fill="#1e2f86" stroke="#101a50"/><path d="M5 6c0-4 5-3 5-1 0 2-2.500 1.500-2.500 4m0 1.500v2" stroke="#fff" fill="none" stroke-width="1.700"/></svg>
  <svg width="11" height="26" class="me-1"><path d="M3.500 1.500h6v4h-2m-6-2h6v4h-6z" fill="none" stroke="#fff"/><path d="M3 17h6l-3 3z" fill="#fff"/></svg>
  <svg width="22" height="18" class="ms-1"><g fill="none" stroke="#5cbf42" stroke-width="2.500"><path d="M2 7q9-8 18 0M5 11q6-5 12 0"/></g><circle cx="11" cy="15" r="2.500" fill="#5cbf42"/></svg>
  <svg width="9" height="5" class="ms-1 me-1"><path d="M0 5h9L4.500 0z" fill="#fff"/></svg>
  <svg width="18" height="18"><circle cx="9" cy="9" r="8" fill="#f5d52e"/><path d="M1 10C0 2 10-1 15 4 9 3 4 5 3 12zm16-3c2 8-7 12-13 8 6 0 11-2 11-9z" fill="#4fae3a"/><path d="M9 5v8M5 9h8" stroke="#143" stroke-width="2.500"/></svg>
  <svg width="16" height="18"><path d="M2 1v16" stroke="#fff" stroke-width="2"/><path d="M3 3h10v8H3z" fill="#d7dfe8" stroke="#fff"/><circle cx="11" cy="12" r="5" fill="#d8332a"/><path d="m9 10 4 4m0-4-4 4" stroke="#fff" stroke-width="1.500"/></svg>
  <svg width="16" height="16"><path d="M1 5h3l4-4v14l-4-4H1z" fill="#fff" stroke="#556"/><path d="M10 5q2 3 0 6m2-8q4 5 0 10" fill="none" stroke="#fff"/></svg>
  <div class="clock text-center ms-1">5:25<br>2016/1/12</div>
  <button class="show-desk p-0" aria-label="显示桌面"></button>
 </div>
</footer>

<section class="palette" aria-label="特性">
 <div class="palette-in d-flex">
  <div class="spine d-flex flex-column align-items-center pt-1 pb-1">
   <svg width="12" height="10"><path d="m1 0 10 10M11 0 1 10M0 5h12" stroke="#000" stroke-width="1.800"/></svg>
   <svg width="18" height="18" class="mt-1"><use href="#props-i"/></svg>
   <span class="spine-title mt-auto mb-2">特性</span>
   <svg width="14" height="13" class="mb-2"><path d="M1 0v13" stroke="#000"/><path d="M4 0h9v13H4z"/><path d="m6 3 5 3.500L6 10z" fill="#9db6d6"/></svg>
   <svg width="14" height="11"><path d="M.5 0v11M3 .5h10v10H3z" fill="#c8d6e8" stroke="#000" stroke-width="1.500"/><path d="M6 3.500h6m-6 2h6m-6 2h6" stroke="#000"/></svg>
  </div>
  <div class="p-body flex-grow-1 d-flex flex-column">
   <div class="d-flex obj-row">
    <div class="combo obj"><select class="form-select" aria-label="对象类型"><option>多段线</option></select></div>
    <div class="d-flex ms-1 ps-1">
     <button class="sq plain-btn" aria-label="切换 PICKADD"><svg width="16" height="16"><path d="M1.500 1.500h13v13h-13z" fill="#dcebf8" stroke="#222" stroke-dasharray="1 1"/><path d="M8 4v8M4 8h8" stroke="#1b57b0" stroke-width="2"/></svg></button>
     <button class="sq plain-btn" aria-label="选择对象"><svg width="16" height="16"><path d="M1.500 1.500h10v12h-10z" fill="#fff" stroke="#555"/><path d="m5 2 5 5m0-5L5 7" stroke="#d21c2c" stroke-width="1.500"/><path d="m8 4 6 6h-3l2 5-2 1-2-5-1 2z" fill="#fff" stroke="#000"/></svg></button>
     <button class="sq plain-btn" aria-label="快速选择"><svg width="18" height="18"><path d="M1 2h13L9 8v7l-3-2V8z" fill="#6b9ecf" stroke="#234a77"/><path d="M16 4 9 12h4l-3 5 7-7h-4z" fill="#ffdc2c" stroke="#a80" stroke-width=".7"/></svg></button>
    </div>
   </div>
   <div class="sec">
    <button class="sec-h">基本<svg width="10" height="10" class="mb-1"><use href="#up2"/></svg></button>
    <table class="props">
     <tr><th scope="row">颜色</th><td><div class="d-flex align-items-center"><span class="swatch me-2"></span>ByLayer</div></td></tr>
     <tr><th scope="row">图层</th><td>0</td></tr>
     <tr><th scope="row">线型</th><td><div class="d-flex align-items-center"><span class="rule-s w60 me-1 ms-1"></span>ByLayer</div></td></tr>
     <tr><th scope="row"><label for="lts">线型比例</label></th><td><input id="lts" value="1"></td></tr>
     <tr><th scope="row">打印样式</th><td class="dim">随颜色</td></tr>
     <tr><th scope="row">线宽</th><td><div class="d-flex align-items-center"><span class="rule-s w60 me-1 ms-1"></span>ByLayer</div></td></tr>
     <tr><th scope="row"><label for="hyp">超链接</label></th><td><input id="hyp"></td></tr>
     <tr><th scope="row"><label for="thk">厚度</label></th><td><input id="thk" value="0"></td></tr>
    </table>
   </div>
   <div class="sec">
    <button class="sec-h">三维效果<svg width="10" height="10" class="mb-1"><use href="#up2"/></svg></button>
    <table class="props"><tr><th scope="row">材质</th><td>ByLayer</td></tr></table>
   </div>
   <div class="sec"><button class="sec-h">几何图形<svg width="10" height="10" class="mb-1"><path d="m1 1 4 4 4-4M1 5l4 4 4-4" fill="none" stroke="#fff" stroke-width="1.500"/></svg></button></div>
   <div>
    <button class="sec-h">其他<svg width="10" height="10" class="mb-1"><use href="#up2"/></svg></button>
    <table class="props">
     <tr><th scope="row">闭合</th><td>是</td></tr>
     <tr class="sel"><th scope="row"><label for="gen">线型生成</label></th><td><select id="gen" class="form-select"><option>启用</option></select></td></tr>
    </table>
   </div>
   <div class="hint mt-auto">决定是否对多段线启用线型生成</div>
  </div>
 </div>
 <svg class="scribble" width="312" height="106"><path d="M9 12 45 11 70 9l40 2 65-7q30-3 55 1 30 5 60 19 16 9 16 17 2 8-11 17l-20 11-25 14q-20 7-40 9l-50 7q-30 3-40 1-30-6-60-17-25-10-45-27Q4 48 4 32l4-18 6-3" fill="none" stroke="#000"/></svg>
</section>

<aside class="balloon" role="status">
 <div class="d-flex align-items-center">
  <svg width="15" height="15"><circle cx="7.500" cy="7.500" r="7" fill="#2452b4" stroke="#8ea6d8"/><path d="M7.500 3v2m0 1.500V12" stroke="#fff" stroke-width="2"/></svg>
  <strong class="flex-grow-1">通讯中心</strong>
  <button class="shut plain-btn" aria-label="关闭"><svg width="9" height="9"><path d="m1 1 7 7m0-7L1 8" stroke="#000" stroke-width="2"/></svg></button>
 </div>
 <div class="ps-1 mt-1 balloon-text">使软件保持最新的简单方法。<br><a href="#">单击此处。</a></div>
 <svg class="tail" width="22" height="24"><path d="M0 0v1l19 20V0z" fill="#ffffe1"/><path d="m0 1 19 20V1" fill="none" stroke="#000"/></svg>
</aside>

<script src="https://cdn.jsdelivr.net/npm/bootstrap@5.3.0/dist/js/bootstrap.bundle.min.js"></script>
</body>
</html>
